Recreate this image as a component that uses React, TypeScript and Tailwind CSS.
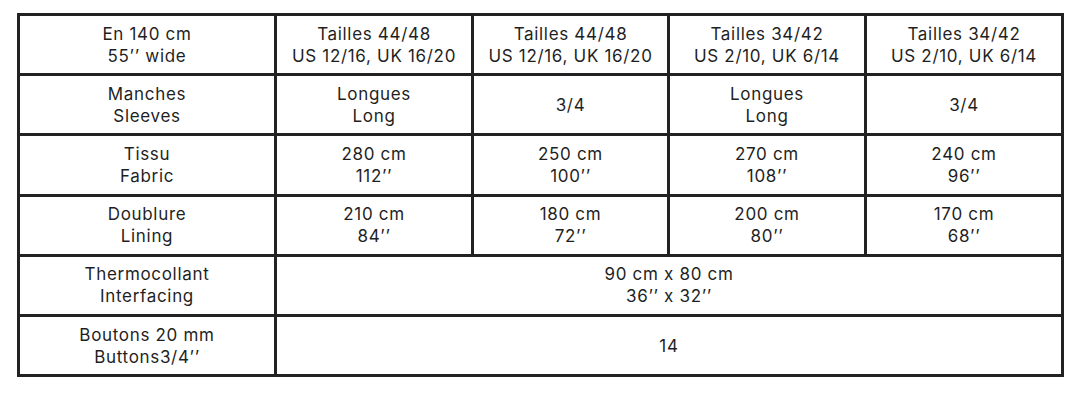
import React from "react";

const rows: { label: [string, string]; cells: [string, string?][] | null; merged?: [string, string?] }[] = [
  {
    label: ["Manches", "Sleeves"],
    cells: [["Longues", "Long"], ["3/4"], ["Longues", "Long"], ["3/4"]],
  },
  {
    label: ["Tissu", "Fabric"],
    cells: [["280 cm", "112’’"], ["250 cm", "100’’"], ["270 cm", "108’’"], ["240 cm", "96’’"]],
  },
  {
    label: ["Doublure", "Lining"],
    cells: [["210 cm", "84’’"], ["180 cm", "72’’"], ["200 cm", "80’’"], ["170 cm", "68’’"]],
  },
  {
    label: ["Thermocollant", "Interfacing"],
    cells: null,
    merged: ["90 cm x 80 cm", "36’’ x 32’’"],
  },
  {
    label: ["Boutons 20 mm", "Buttons3/4’’"],
    cells: null,
    merged: ["14"],
  },
];

const head: [string, string][] = [
  ["Tailles 44/48", "US 12/16, UK 16/20"],
  ["Tailles 44/48", "US 12/16, UK 16/20"],
  ["Tailles 34/42", "US 2/10, UK 6/14"],
  ["Tailles 34/42", "US 2/10, UK 6/14"],
];

function Cell({ lines, span }: { lines: [string, string?]; span?: number }) {
  return (
    <td colSpan={span} className="border-[3px] border-[#222222] text-center align-middle p-0 h-[60.2px]">
      <div>{lines[0]}</div>
      {lines[1] && <div>{lines[1]}</div>}
    </td>
  );
}

export default function App() {
  return (
    <div
      className="w-[1078px] h-[400px] bg-white pt-[13px] pl-[17px]"
      style={{ fontFamily: "Inter, 'Liberation Sans', sans-serif" }}
    >
      <table className="border-collapse text-[17px] leading-[22px] tracking-[0.04em] text-[#1f1f1f] table-fixed w-[1044px]">
        <colgroup>
          <col className="w-[257px]" />
          <col className="w-[197px]" />
          <col className="w-[196px]" />
          <col className="w-[197px]" />
          <col className="w-[197px]" />
        </colgroup>
        <tbody>
          <tr>
            <Cell lines={["En 140 cm", "55’’ wide"]} />
            {head.map((h, i) => (
              <Cell key={i} lines={h} />
            ))}
          </tr>
          {rows.map((r, i) => (
            <tr key={i}>
              <Cell lines={r.label} />
              {r.cells ? r.cells.map((c, j) => <Cell key={j} lines={c} />) : <Cell lines={r.merged!} span={4} />}
            </tr>
          ))}
        </tbody>
      </table>
    </div>
  );
}
